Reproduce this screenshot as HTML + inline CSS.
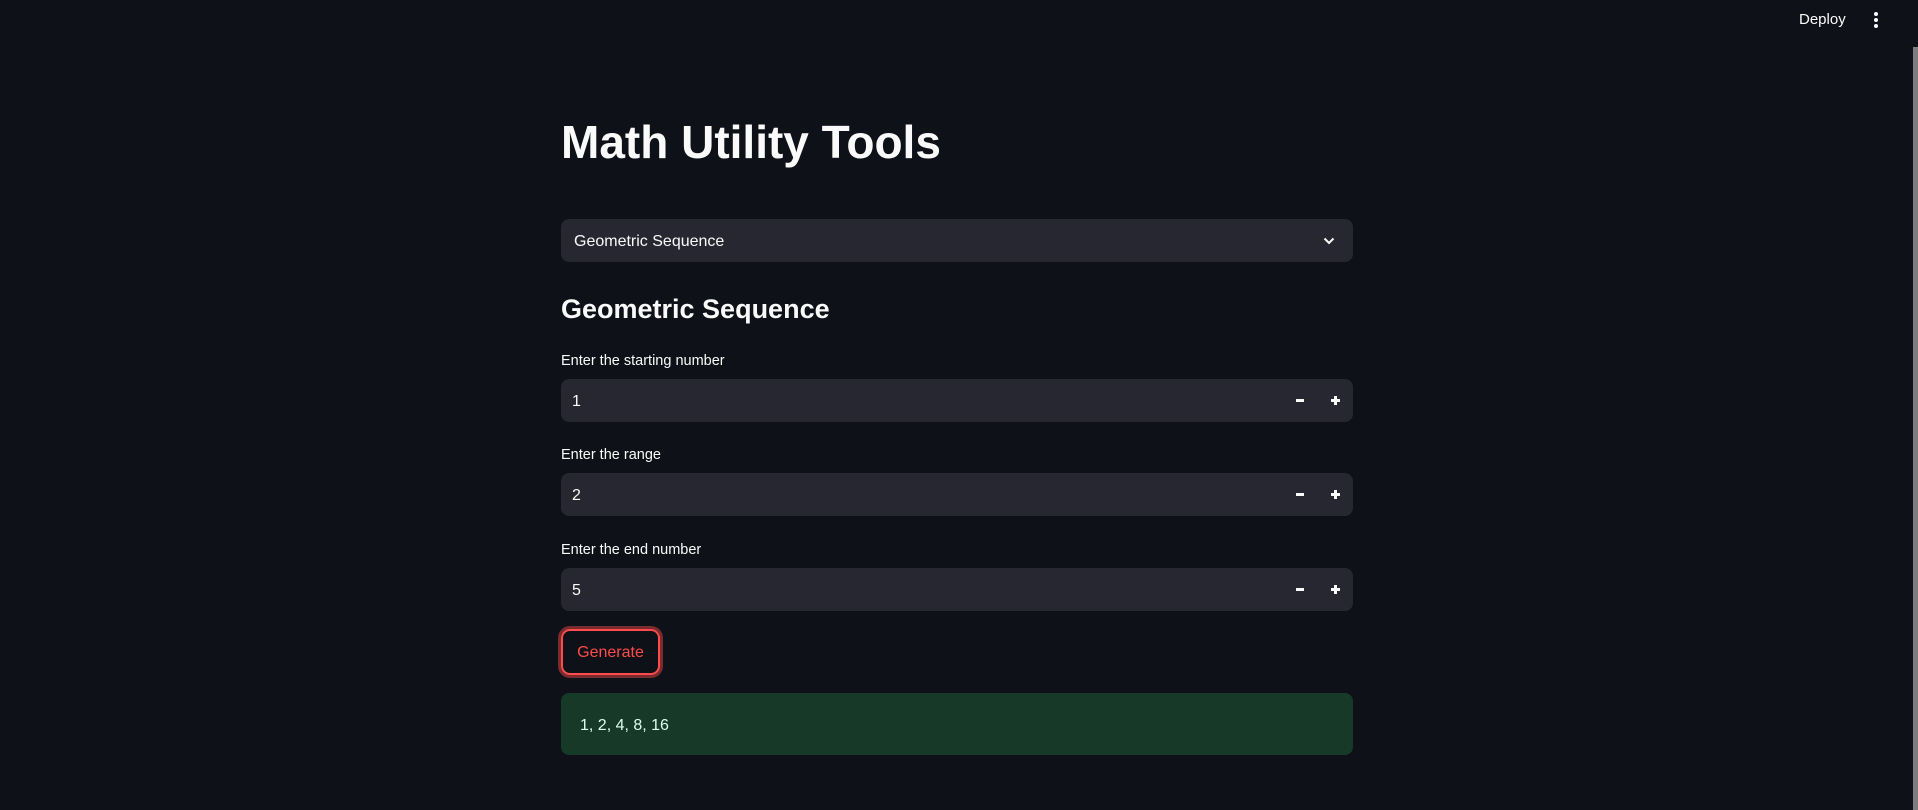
<!DOCTYPE html>
<html><head><meta charset="utf-8"><style>
*{box-sizing:border-box;margin:0;padding:0}
body{width:1918px;height:810px;background:#0e1117;color:#fafafa;font-family:"Liberation Sans",sans-serif;position:relative;overflow:hidden}
.a{position:absolute}
h1{position:absolute;left:561px;top:114px;font-size:46px;font-weight:bold;line-height:56px}
h2{position:absolute;left:561px;top:291px;font-size:27px;font-weight:bold;line-height:36px}
.sel,.inp{position:absolute;left:561px;width:792px;background:#262730;border-radius:8px}
.sel{top:219px;height:43px}
.sel span{position:absolute;left:13px;top:14px;font-size:16px}
.inp{height:43px}
.inp .v{position:absolute;left:11px;top:14px;font-size:16px}
.m{position:absolute;left:735px;top:20px;width:8px;height:2.5px;background:#fafafa}
.p1{position:absolute;left:770px;top:20px;width:9px;height:2.5px;background:#fafafa}
.p2{position:absolute;left:773.2px;top:17px;width:2.5px;height:9px;background:#fafafa}
.lab{position:absolute;left:561px;font-size:14.5px;color:#fafafa}
.btn{position:absolute;left:561px;top:629px;width:99px;height:46px;border:2px solid #ff4b4b;border-radius:9px;box-shadow:0 0 0 3px rgba(255,75,75,.45);color:#ff4b4b;font-size:16px;text-align:center;line-height:44px}
.res{position:absolute;left:561px;top:693px;width:792px;height:62px;background:#173928;border-radius:8px}
.res span{position:absolute;left:19px;top:24px;font-size:16px;color:#dffde9}
</style></head><body>
<div class="a" style="left:1799px;top:11px;font-size:15px">Deploy</div>
<div class="a" style="left:1874px;top:12px;width:4px;height:4px;border-radius:2px;background:#fafafa"></div>
<div class="a" style="left:1874px;top:18px;width:4px;height:4px;border-radius:2px;background:#fafafa"></div>
<div class="a" style="left:1874px;top:24px;width:4px;height:4px;border-radius:2px;background:#fafafa"></div>
<div class="a" style="left:1913px;top:47px;width:5px;height:763px;background:#7d7d7d"></div>

<h1>Math Utility Tools</h1>
<div class="sel"><span>Geometric Sequence</span>
<svg class="a" style="left:762px;top:17px" width="12" height="10" viewBox="0 0 12 10"><path d="M1.5 2.5 L6 7 L10.5 2.5" stroke="#fafafa" stroke-width="2" fill="none"/></svg></div>
<h2>Geometric Sequence</h2>

<div class="lab" style="top:353px">Enter the starting number</div>
<div class="inp" style="top:379px"><span class="v">1</span><div class="m"></div><div class="p1"></div><div class="p2"></div></div>
<div class="lab" style="top:447px">Enter the range</div>
<div class="inp" style="top:473px"><span class="v">2</span><div class="m"></div><div class="p1"></div><div class="p2"></div></div>
<div class="lab" style="top:542px">Enter the end number</div>
<div class="inp" style="top:568px"><span class="v">5</span><div class="m"></div><div class="p1"></div><div class="p2"></div></div>

<div class="btn">Generate</div>
<div class="res"><span>1, 2, 4, 8, 16</span></div>
</body></html>
